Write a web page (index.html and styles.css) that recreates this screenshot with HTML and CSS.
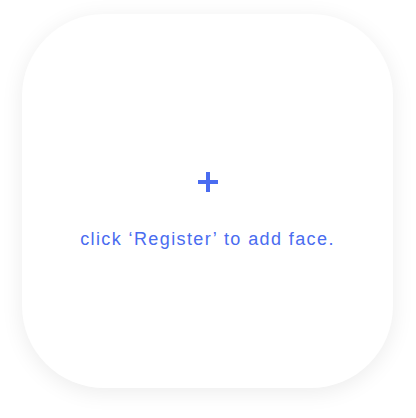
FILE: index.html
```html
<!DOCTYPE html>
<html>
<head>
<meta charset="utf-8">
<link rel="stylesheet" href="styles.css">
</head>
<body>
<div class="page">
  <div class="card">
    <svg class="plus" width="20" height="20" viewBox="0 0 20 20">
      <rect x="8" y="0" width="4" height="20" fill="#4a6cf0"/>
      <rect x="0" y="8" width="20" height="4" fill="#4a6cf0"/>
    </svg>
    <div class="hint">click ‘Register’ to add face.</div>
  </div>
</div>
</body>
</html>
```
FILE: styles.css
```css
html, body { margin: 0; padding: 0; background: #fff; }
.page {
  width: 416px;
  height: 418px;
  padding: 14px 23px 30px 22px;
  box-sizing: border-box;
}
.card {
  width: 371px;
  height: 374px;
  border-radius: 82px;
  background: #fff;
  box-shadow: 0 4px 22px rgba(0, 0, 0, 0.08);
  display: flex;
  flex-direction: column;
  align-items: center;
  justify-content: center;
  padding-top: 18px;
  box-sizing: border-box;
}
.plus { display: block; margin-left: 1px; }
.hint {
  margin-top: 37px;
  font-family: "Liberation Sans", Arial, sans-serif;
  font-size: 18px;
  letter-spacing: 1.4px;
  color: #4a6cf0;
  line-height: 20px;
}
```
